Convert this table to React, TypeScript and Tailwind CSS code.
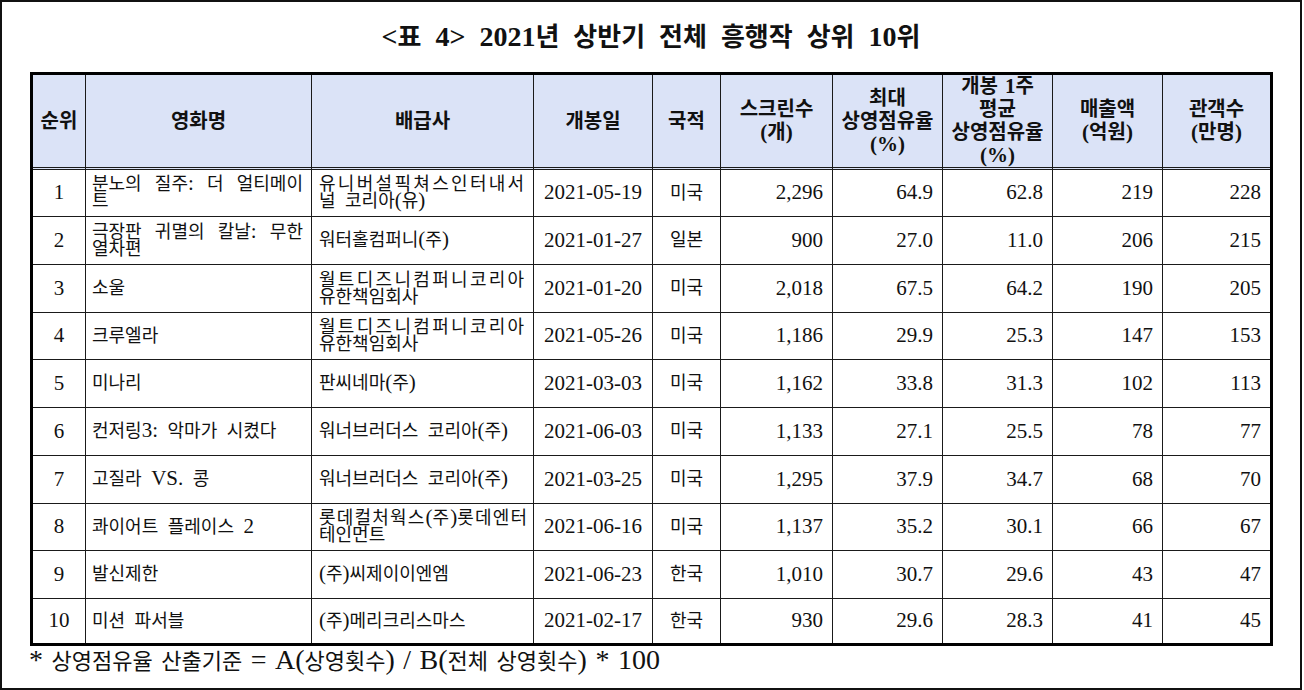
import React from 'react';

type Row = {
  no: string;
  title: string[];
  dist: string[];
  date: string;
  nat: string;
  scr: string;
  max: string;
  avg: string;
  sales: string;
  aud: string;
};

const rows: Row[] = [
  { no: '1', title: ['분노의 질주: 더 얼티메이', '트'], dist: ['유니버설픽쳐스인터내서', '널 코리아(유)'], date: '2021-05-19', nat: '미국', scr: '2,296', max: '64.9', avg: '62.8', sales: '219', aud: '228' },
  { no: '2', title: ['극장판 귀멸의 칼날: 무한', '열차편'], dist: ['워터홀컴퍼니(주)'], date: '2021-01-27', nat: '일본', scr: '900', max: '27.0', avg: '11.0', sales: '206', aud: '215' },
  { no: '3', title: ['소울'], dist: ['월트디즈니컴퍼니코리아', '유한책임회사'], date: '2021-01-20', nat: '미국', scr: '2,018', max: '67.5', avg: '64.2', sales: '190', aud: '205' },
  { no: '4', title: ['크루엘라'], dist: ['월트디즈니컴퍼니코리아', '유한책임회사'], date: '2021-05-26', nat: '미국', scr: '1,186', max: '29.9', avg: '25.3', sales: '147', aud: '153' },
  { no: '5', title: ['미나리'], dist: ['판씨네마(주)'], date: '2021-03-03', nat: '미국', scr: '1,162', max: '33.8', avg: '31.3', sales: '102', aud: '113' },
  { no: '6', title: ['컨저링3: 악마가 시켰다'], dist: ['워너브러더스 코리아(주)'], date: '2021-06-03', nat: '미국', scr: '1,133', max: '27.1', avg: '25.5', sales: '78', aud: '77' },
  { no: '7', title: ['고질라 VS. 콩'], dist: ['워너브러더스 코리아(주)'], date: '2021-03-25', nat: '미국', scr: '1,295', max: '37.9', avg: '34.7', sales: '68', aud: '70' },
  { no: '8', title: ['콰이어트 플레이스 2'], dist: ['롯데컬처웍스(주)롯데엔터', '테인먼트'], date: '2021-06-16', nat: '미국', scr: '1,137', max: '35.2', avg: '30.1', sales: '66', aud: '67' },
  { no: '9', title: ['발신제한'], dist: ['(주)씨제이이엔엠'], date: '2021-06-23', nat: '한국', scr: '1,010', max: '30.7', avg: '29.6', sales: '43', aud: '47' },
  { no: '10', title: ['미션 파서블'], dist: ['(주)메리크리스마스'], date: '2021-02-17', nat: '한국', scr: '930', max: '29.6', avg: '28.3', sales: '41', aud: '45' },
];

// row heights in px, border included
const rowH = ['h-[47px]', 'h-[48px]', 'h-[48px]', 'h-[47px]', 'h-[48px]', 'h-[48px]', 'h-[48px]', 'h-[47px]', 'h-[48px]', 'h-[44px]'];

// lines without spaces get spread by letter spacing
const tracking: Record<string, string> = {
  '유니버설픽쳐스인터내서': 'tracking-[2.3px]',
  '월트디즈니컴퍼니코리아': 'tracking-[2.3px]',
  '롯데컬처웍스(주)롯데엔터': 'tracking-[1.2px]',
};

// hangul + spaces at the base size, latin runs bigger (serif digits)
function Mixed({ text, latin }: { text: string; latin: string }) {
  const parts = text.split(/([가-힣\s]+)/);
  return (
    <>
      {parts.map((p, i) =>
        p === '' ? null : i % 2 === 1 ? (
          <span key={i}>{p}</span>
        ) : (
          <span key={i} className={latin}>
            {p}
          </span>
        )
      )}
    </>
  );
}

function Lines({ lines }: { lines: string[] }) {
  return (
    <>
      {lines.map((l, i) => {
        let cls = 'whitespace-nowrap';
        if (lines.length > 1 && i === 0) {
          cls += ' [text-align-last:justify] ' + (tracking[l] ?? '');
        }
        return (
          <div key={i} className={cls}>
            <Mixed text={l} latin="text-[21px] leading-[0px] tracking-normal" />
          </div>
        );
      })}
    </>
  );
}

const th = 'border-r border-b-[3px] border-double border-[#1a1a1a] font-bold text-center align-middle p-0';
const td = 'border-r border-b border-[#1a1a1a] align-middle p-0';
const num = 'text-[21px] text-right pr-[9px]';

function Head({ lines }: { lines: string[] }) {
  return (
    <>
      {lines.map((l, i) => (
        <div key={i} className="whitespace-nowrap">
          <Mixed text={l} latin="text-[21px] leading-[0px]" />
        </div>
      ))}
    </>
  );
}

export default function App() {
  return (
    <div className="w-[1302px] h-[690px] border-2 border-[#111] bg-white text-[#111] font-['Liberation_Serif','Noto_Sans_CJK_KR',serif] flex flex-col">
      {/* title */}
      <div className="h-[70px] flex items-center justify-center text-[26px] font-bold [word-spacing:7.5px]">
        <div>
          <Mixed text="<표 4> 2021년 상반기 전체 흥행작 상위 10위" latin="text-[28px] leading-[0px]" />
        </div>
      </div>

      <table className="table-fixed border-separate border-spacing-0 border-[3px] border-black w-[1243px] ml-[28px] text-[18px] [word-spacing:5px]">
        <colgroup>
          <col className="w-[53px]" />
          <col className="w-[226px]" />
          <col className="w-[222px]" />
          <col className="w-[119px]" />
          <col className="w-[68px]" />
          <col className="w-[112px]" />
          <col className="w-[110px]" />
          <col className="w-[110px]" />
          <col className="w-[110px]" />
          <col className="w-[107px]" />
        </colgroup>
        <thead>
          <tr className="h-[95px] bg-[#dbe3f7] leading-[23px] text-[20px] [word-spacing:2px]">
            <th className={th}><Head lines={['순위']} /></th>
            <th className={th}><Head lines={['영화명']} /></th>
            <th className={th}><Head lines={['배급사']} /></th>
            <th className={th}><Head lines={['개봉일']} /></th>
            <th className={th}><Head lines={['국적']} /></th>
            <th className={th}><Head lines={['스크린수', '(개)']} /></th>
            <th className={th}><Head lines={['최대', '상영점유율', '(%)']} /></th>
            <th className={th}><Head lines={['개봉 1주', '평균', '상영점유율', '(%)']} /></th>
            <th className={th}><Head lines={['매출액', '(억원)']} /></th>
            <th className={th + ' border-r-0'}><Head lines={['관객수', '(만명)']} /></th>
          </tr>
        </thead>
        <tbody>
          {rows.map((r, i) => {
            const last = i === rows.length - 1;
            const c = last ? td + ' border-b-0' : td;
            return (
              <tr key={r.no} className={rowH[i]}>
                <td className={c + ' text-[21px] text-center'}>{r.no}</td>
                <td className={c + ' pl-[6px] pr-[8px] text-left leading-[17px]'}>
                  <Lines lines={r.title} />
                </td>
                <td className={c + ' pl-[7px] pr-[8px] text-left leading-[17px]'}>
                  <Lines lines={r.dist} />
                </td>
                <td className={c + ' text-[21px] text-center'}>{r.date}</td>
                <td className={c + ' text-center'}>{r.nat}</td>
                <td className={c + ' ' + num}>{r.scr}</td>
                <td className={c + ' ' + num}>{r.max}</td>
                <td className={c + ' ' + num}>{r.avg}</td>
                <td className={c + ' ' + num}>{r.sales}</td>
                <td className={c + ' ' + num + ' border-r-0 pr-[7px]'}>{r.aud}</td>
              </tr>
            );
          })}
        </tbody>
      </table>

      {/* footnote */}
      <div className="pl-[27px] leading-[32px] text-[22px] [word-spacing:3px]">
        <Mixed text="* 상영점유율 산출기준 = A(상영횟수) / B(전체 상영횟수) * 100" latin="text-[28px] leading-[0px]" />
      </div>
    </div>
  );
}
